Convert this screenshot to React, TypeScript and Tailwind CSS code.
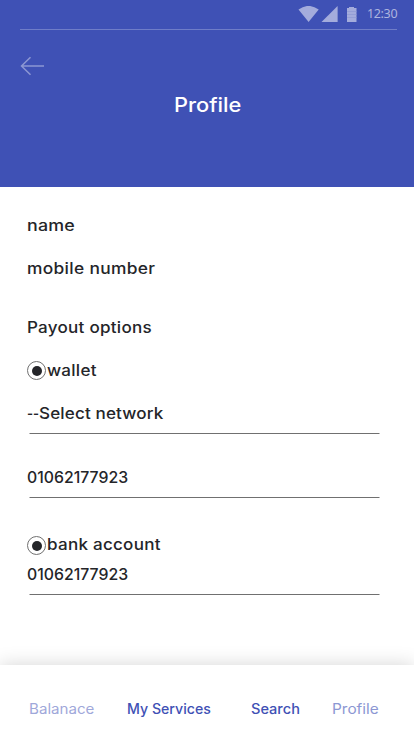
import type { ReactNode } from "react";

function StatusBar() {
  return (
    <div className="mx-[20px] flex h-[30px] w-[377px] items-start justify-end border-b border-[#6f7dc8]">
      <svg className="mt-[6px] h-4 w-[68px] shrink-0 fill-[#a4acdc]" viewBox="0 0 68 16" aria-hidden="true">
        <path d="M0.5 3.6 Q10.5 -3.8 20.7 3.6 L10.6 16 Z" />
        <path d="M23.5 16 L39.6 0 V16 Z" />
        <path d="M49 2 H51 V1 H56 V2 H58.5 V16 H49 Z" />
        <path d="M49 5.5 H58.5 M49 8.5 H58.5 M49 11.5 H58.5" stroke="#8f99d3" strokeWidth="0.7" />
      </svg>
      <span className="mt-[5px] ml-px w-[30px] text-[12.5px] leading-[18px] font-normal tracking-[-0.35px] whitespace-nowrap text-[#adb4df] [font-family:'Noto_Sans',sans-serif]">
        12:30
      </span>
    </div>
  );
}

function Header() {
  return (
    <header className="h-[187px] bg-[#3f51b5]">
      <StatusBar />
      <svg className="mt-[26px] ml-5 h-5 w-6" viewBox="0 0 24 20" fill="none" stroke="#8c97d3" strokeWidth="1.5" aria-hidden="true">
        <path d="M1.5 10 H24 M10.5 1.2 L1.5 10 L10.5 18.8" />
      </svg>
      <h1 className="mt-[15px] ml-[174px] w-fit origin-left scale-x-[1.09] text-[20px] leading-7 font-medium text-white">Profile</h1>
    </header>
  );
}

function Wide({ children }: { children: ReactNode }) {
  return <span className="inline-block origin-left scale-x-[1.1] tracking-[0.23px] whitespace-nowrap">{children}</span>;
}

function Radio() {
  return (
    <svg className="mt-px h-5 w-5 shrink-0" viewBox="0 0 20 20" aria-hidden="true">
      <circle cx="9.5" cy="10.5" r="9" fill="#fff" stroke="#707070" />
      <circle cx="10" cy="11" r="5" fill="#242529" />
    </svg>
  );
}

function Rule() {
  return <div className="ml-[2px] h-px w-[351px] border-x border-[#b8b8b8] bg-[#707070]" />;
}

export default function App() {
  return (
    <div className="flex h-[735px] w-[414px] flex-col overflow-hidden bg-white text-[#242529] [font-family:Inter,sans-serif]">
      <Header />
      <main className="flex-1 px-[27px] pt-[27px] text-[15.5px] leading-6 font-medium">
        <p className="w-fit origin-left scale-x-[1.15] tracking-[0.2px]">name</p>
        <p className="mt-[19px] w-fit origin-left scale-x-[1.12] tracking-[0.28px]">mobile number</p>
        <p className="mt-[35px] h-6"><Wide>Payout options</Wide></p>
        <div className="mt-[19px] flex h-6">
          <Radio />
          <Wide>wallet</Wide>
        </div>
        <p className="mt-[19px] mb-[7px] flex h-6 whitespace-pre">
          <span className="w-[12px]"><span className="inline-block origin-left scale-x-[0.84]">--</span></span>
          <span className="inline-block origin-left scale-x-[1.1] tracking-[0.13px]">Select network</span>
        </p>
        <Rule />
        <p className="mt-[32px] mb-[7px] w-fit origin-left scale-x-[1.02]">01062177923</p>
        <Rule />
        <div className="mt-[35px] flex h-6">
          <div className="mt-px">
            <Radio />
          </div>
          <Wide>bank account</Wide>
        </div>
        <p className="mt-[6px] mb-[7px] w-fit origin-left scale-x-[1.02]">01062177923</p>
        <Rule />
      </main>
      <nav className="flex h-[70px] bg-white pt-[34px] pl-[29px] text-[14px] leading-5 whitespace-nowrap text-[#3f51b5] shadow-[0_0_18px_rgba(0,0,0,0.17)]">
        <span className="w-[98px]"><span className="inline-block origin-left scale-x-[1.08] text-[#9fa8da]">Balanace</span></span>
        <span className="w-[124px] font-medium"><span className="inline-block origin-left scale-x-[1.01]">My Services</span></span>
        <span className="w-[81px] font-medium"><span className="inline-block origin-left scale-x-[1.04]">Search</span></span>
        <span className="inline-block w-fit origin-left scale-x-[1.1] self-start text-[#8c97d3]">Profile</span>
      </nav>
    </div>
  );
}
